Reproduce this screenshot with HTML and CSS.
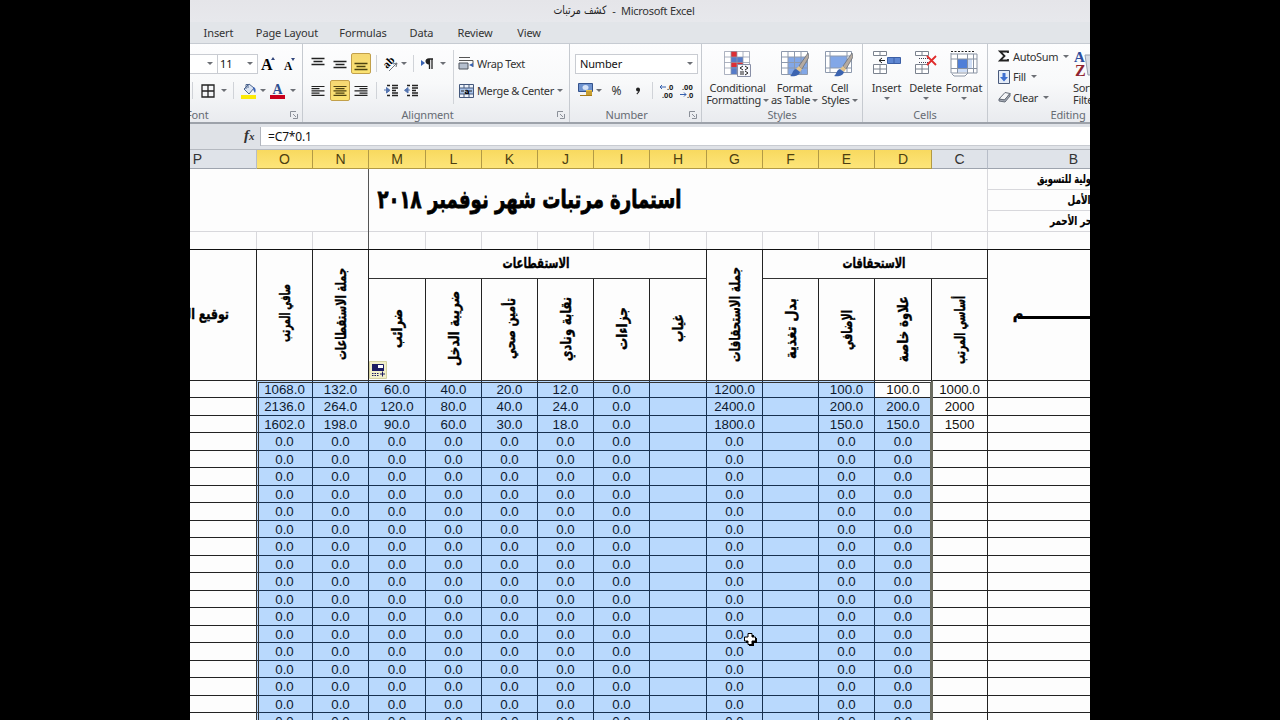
FILE: index.html
```html
<!DOCTYPE html>
<html lang="en">
<head>
<meta charset="utf-8">
<title>كشف مرتبات - Microsoft Excel</title>
<link rel="stylesheet" href="styles.css">
</head>
<body>
<svg class="defs" width="0" height="0">
  <symbol id="launch" viewBox="0 0 8 8"><path d="M.5 6V.5H6M3 3l3 3M7.500 3v4.500H3" fill="none" stroke="#8b9099"/></symbol>
  <symbol id="brush" viewBox="0 0 19 26"><path d="M18 1L9 14l3 3L19 5z" fill="#b5aaa0" stroke="#69707a" stroke-width=".8"/><path d="M9 14l3 3-2 3-4-3z" fill="#e4c38a"/><path d="M6 17l4 3c-1 4-6 5-10 4 3-2 2-6 6-7z" fill="#3c64b0"/></symbol>
</svg>
<div class="app">
  <header class="title"><svg class="ar" width="54" height="18"><text class="ttl" x="27" y="14" textLength="53" lengthAdjust="spacingAndGlyphs">كشف مرتبات</text></svg><i>-</i><span>Microsoft Excel</span></header>
  <nav class="tabs"><span>Insert</span><span>Page Layout</span><span>Formulas</span><span>Data</span><span>Review</span><span>View</span></nav>
  <div class="ribbon">
    <section class="group g-font">
      <div class="row f1">
        <span class="box nm"><b class="dd"></b></span><span class="box sz">11<b class="dd"></b></span>
        <svg width="16" height="18"><text x="0" y="15" class="serif" font-size="16">A</text><path d="M10 5l2-3 2 3z" fill="#33477c"/></svg>
        <svg width="16" height="18"><text x="2" y="15" class="serif" font-size="11.500">A</text><path d="M9 3h4l-2 3z" fill="#33477c"/></svg>
      </div>
      <div class="row f2">
        <u></u>
        <svg width="14" height="14"><path d="M1 1h12v12H1zM7 1v12M1 7h12" fill="none" stroke="#222" stroke-width="1.300"/></svg><b class="dd"></b><u></u>
        <svg width="16" height="16"><path d="M3 6l5-5 5 4-5 6z" fill="#dbe4f2" stroke="#4e668f"/><path d="M5 6V1.500h2V5" fill="none" stroke="#4e668f"/><path d="M12 4c3 0 3 4 2 6-1-2-2-3-2-6" fill="#3f66b5"/><path d="M0 12h15v4H0z" fill="#fcea08"/></svg><b class="dd"></b>
        <svg width="16" height="16"><text x="2.500" y="11" class="serif" font-size="14" fill="#2f4f8f">A</text><path d="M0 12h15v4H0z" fill="#c8001c"/></svg><b class="dd"></b>
      </div>
      <footer><span>Font</span><svg width="8" height="8"><use href="#launch"/></svg></footer>
    </section>
    <section class="group g-align">
      <div class="row a1">
        <span class="ic"><svg width="14" height="14"><path d="M.5 1.500h13M2.500 4.500h9M.500 7.500h13" stroke="#222" stroke-width="1.300"/></svg></span>
        <span class="ic"><svg width="14" height="14"><path d="M.5 4.500h13M2.500 7.500h9M.500 10.500h13" stroke="#222" stroke-width="1.300"/></svg></span>
        <span class="ic on"><svg width="14" height="14"><path d="M.5 6.500h13M2.500 9.500h9M.500 12.500h13" stroke="#4d4310" stroke-width="1.300"/></svg></span>
        <u></u>
        <svg width="17" height="16"><text transform="translate(5 13) rotate(-45)" x="0" y="0" class="serif" font-size="11">ab</text><path d="M7 15L15 7M15 7l-4 1M15 7l-1 4" stroke="#6d737c" fill="none"/></svg><b class="dd"></b><u></u>
        <svg width="14" height="12"><path d="M0 2l4 3-4 3z" fill="#3762b3"/><path d="M9 6C4 6 4 1 8 1h4M8.500 1v10M11 1v10" stroke="#222" fill="none" stroke-width="1.300"/><path d="M8 1v5C4 6 4 1 8 1" fill="#222"/></svg><b class="dd"></b><u class="tallsep"></u>
        <svg width="16" height="15"><path d="M1 1.500h11M1 4.500h14v6l-2-2" stroke="#555" fill="none"/><path d="M1 7h9v6H1z" fill="#b5bfce" stroke="#4d535c"/><path d="M11 9l4-2v4z" fill="#3762b3"/></svg><span class="lb">Wrap Text</span>
      </div>
      <div class="row a2">
        <span class="ic"><svg width="14" height="12"><path d="M.5 1.500h13M.500 3.700h8M.500 5.900h13M.500 8.100h8M.500 10.300h13" stroke="#222" stroke-width="1.200"/></svg></span>
        <span class="ic on"><svg width="14" height="12"><path d="M.5 1.500h13M2.500 3.700h9M.500 5.900h13M2.500 8.100h9M.500 10.300h13" stroke="#4d4310" stroke-width="1.200"/></svg></span>
        <span class="ic"><svg width="14" height="12"><path d="M.5 1.500h13M5.500 3.700h8M.500 5.900h13M5.500 8.100h8M.500 10.300h13" stroke="#222" stroke-width="1.200"/></svg></span>
        <u></u>
        <svg width="15" height="13"><path d="M3 1.500h3M8 1.500h6M8 4h6M8 6.500h4M8 9h6M3 11.500h3M8 11.500h6" stroke="#222" stroke-width="1.300"/><path d="M0 6h5M2.500 3.500L6 6.300 2.500 9z" stroke="#5575b0" fill="#5575b0"/></svg>
        <svg width="15" height="13"><path d="M3 1.500h3M8 1.500h6M8 4h6M8 6.500h4M8 9h6M3 11.500h3M8 11.500h6" stroke="#222" stroke-width="1.300"/><path d="M6 6H1M4 3.500L.5 6.300 4 9z" stroke="#5575b0" fill="#5575b0"/></svg><u class="sp"></u>
        <svg width="15" height="14"><path d="M.5.5h14v13H.5z" fill="#eef3fa" stroke="#44587c"/><path d="M1 4h13v6H1z" fill="#a8c3ea"/><path d="M5 .5V4M10 .5V4M5 10v3M10 10v3M1 4h13M1 10h13" stroke="#44587c"/><text x="5.500" y="9.500" font-size="7.500" font-weight="bold">a</text><path d="M5 7H2m8 0h3" stroke="#222"/></svg><span class="lb mc">Merge &amp; Center</span><b class="dd"></b>
      </div>
      <footer><span>Alignment</span><svg width="8" height="8"><use href="#launch"/></svg></footer>
    </section>
    <section class="group g-num">
      <div class="row n1"><span class="box">Number<b class="dd"></b></span></div>
      <div class="row n2">
        <svg width="16" height="15"><path d="M.5.5h14v8H.5z" fill="#6e93cf" stroke="#34538c"/><ellipse cx="7.500" cy="4.500" rx="3" ry="2.500" fill="#d5e2f6"/><path d="M8 7h6v6H8z" fill="#e8c34d"/><path d="M8 9h6M8 11h6M2 12.500h12" stroke="#a77a15"/></svg><b class="dd"></b><span class="pc">%</span>
        <svg width="6" height="8"><circle cx="3" cy="2.500" r="2" fill="#222"/><path d="M4.300 2.500C4.300 5 3.500 6 1.800 7" stroke="#222" stroke-width="1.300" fill="none"/></svg><u></u>
        <svg width="16" height="14"><text x="8" y="6" class="dec">.0</text><text x="3" y="13.500" class="dec">.00</text><path d="M7 3H1l2-2M1 3l2 2" stroke="#3560ae" fill="none"/></svg>
        <svg width="16" height="14"><text x="3" y="6" class="dec">.00</text><text x="8" y="13.500" class="dec">.0</text><path d="M1 10.500h6l-2-2M7 10.500l-2 2" stroke="#3560ae" fill="none"/></svg>
      </div>
      <footer><span>Number</span><svg width="8" height="8"><use href="#launch"/></svg></footer>
    </section>
    <section class="group g-styles">
      <div class="bigs s">
        <div class="big"><svg width="28" height="28"><path d="M.5 1.500h25v23H.5z" fill="#fff"/><path d="M7 1h6v7H7zM7 12h12v5H7z" fill="#dc2f35"/><path d="M7 7h12v5H7zM7 17h6v7H7z" fill="#557bc8"/><path d="M.5 1.500h25v23H.5zM7 1.500v23M13 1.500v23M19 1.500v23M.500 7h25M.500 12.500h25M.500 18h25" fill="none" stroke="#9199ab" stroke-opacity=".75"/><path d="M13.500 14.500h13v12h-13z" fill="#f6f7fc" stroke="#888fa6"/><path d="M19 16l-3 2 3 2M21 16l3 2-3 2M16 22h4M16 24h4M21 21l3 2-3 2" stroke="#222" fill="none"/></svg><span>Conditional</span><span>Formatting<b class="dd"></b></span></div>
        <div class="big"><svg width="28" height="28"><path d="M.5 1.500h26v23H.5z" fill="#fff"/><path d="M7 7h19v17H7z" fill="#82a7e7"/><path d="M.5 1.500h26v23H.5zM7 1.500v23M13.500 1.500v23M20 1.500v23M.500 7h26M.500 12.500h26M.500 18h26" fill="none" stroke="#8d99ad"/><use href="#brush" x="9" y="2" width="19" height="26"/></svg><span>Format</span><span>as Table<b class="dd"></b></span></div>
        <div class="big"><svg width="28" height="28"><path d="M.5 1.500h26v21H.5z" fill="#fff"/><path d="M5 6h17v12H5z" fill="#82a7e7"/><path d="M.5 1.500h26v21H.5zM5 1.500v21M22 1.500v21M.500 6h26M.500 18h26" fill="none" stroke="#8d99ad"/><use href="#brush" x="9" y="2" width="19" height="26"/></svg><span>Cell</span><span>Styles<b class="dd"></b></span></div>
      </div>
      <footer><span>Styles</span></footer>
    </section>
    <section class="group g-cells">
      <div class="bigs c">
        <div class="big"><svg width="28" height="28"><path d="M.5 1.500h13v4H.5zM7 1.500v4M.500 14.500h13v9H.5zM7 14.500v9M.500 19h13" fill="#fff" stroke="#7b828e"/><path d="M14.500 7.500h13v6h-13z" fill="#5f87d2" stroke="#3c5fa5"/><path d="M21 8v5" stroke="#3c5fa5"/><path d="M12 10.500H6l3-2.500M6 10.500L9 13" stroke="#222" fill="none"/></svg><span>Insert</span><b class="dd"></b></div>
        <div class="big"><svg width="28" height="28"><path d="M3.500 1.500h13v4h-13zM10 1.500v4M3.500 14.500h13v9h-13zM10 14.500v9M3.500 19h13" fill="#fff" stroke="#7b828e"/><path d="M7 8.500h11M7 12.500h11" stroke="#445" stroke-dasharray="1 1"/><path d="M15 6l9 9M24 6l-9 9" stroke="#e02c2c" stroke-width="1.800"/></svg><span>Delete</span><b class="dd"></b></div>
        <div class="big"><svg width="28" height="28"><path d="M.5 4.500h27v18l-9 4h-16l-2-4z" fill="#fff"/><path d="M8 9h9v10H8z" fill="#4f7fd8"/><path d="M17 9h5v10h-5zM8 19h9v3H8z" fill="#cfdef6"/><path d="M1 3v20h26V4H1M7.500 4v19M17.500 4v19M23.500 4v19M1 9h26M1 18.500h26M2 24l2 2h11l3-3" fill="none" stroke="#8993a3"/><path d="M1 1.500h23" stroke="#222" stroke-dasharray="2 1.500"/></svg><span>Format</span><b class="dd"></b></div>
      </div>
      <footer><span>Cells</span></footer>
    </section>
    <section class="group g-edit">
      <div class="edit">
        <div class="list">
          <div><svg width="12" height="14"><path d="M10 4V2.500H2L6.500 7 2 11.500h8V10" fill="none" stroke="#222" stroke-width="1.800"/></svg><span>AutoSum</span><b class="dd"></b></div>
          <div><svg width="12" height="14"><path d="M.5.5h11v13H.5z" fill="#e4ecf8" stroke="#4a5b7c"/><path d="M4.500 3h3v4H10l-4 4.500L2 7h2.500z" fill="#3d6fd0"/></svg><span>Fill</span><b class="dd"></b></div>
          <div><svg width="12" height="14"><path d="M1 9l6-6.500 5 1L6.500 10z" fill="#f5f6f8" stroke="#666d78"/><path d="M1 9l5.500 1L12 3.500V6l-5 6-6-1z" fill="#a9afba" stroke="#666d78"/></svg><span>Clear</span><b class="dd"></b></div>
        </div>
        <div class="big sort"><svg width="28" height="28"><path d="M12 5h14v20H15z" fill="#d8dce4" stroke="#989fae"/><text x="1" y="12" class="serif" font-size="15" fill="#2c4d9c">A</text><text x="2" y="26" class="serif" font-size="16" fill="#8f2430">Z</text></svg><span>Sort &amp;</span><span>Filter</span></div>
      </div>
      <footer><span>Editing</span></footer>
    </section>
  </div>
  <div class="fbar"><div class="fx"><em>f</em><em class="x">x</em></div><div class="formula">=C7*0.1</div></div>
  <div class="cols" id="cols"></div>
  <div class="top">
    <div class="topl"></div>
    <div class="heading"><svg width="618" height="62"><text class="head" x="160.500" y="39" textLength="304" lengthAdjust="spacingAndGlyphs">استمارة مرتبات شهر نوفمبر ٢٠١٨</text></svg></div>
    <div class="comp">
      <svg width="103" height="21"><text class="co" x="76" y="14" textLength="54" lengthAdjust="spacingAndGlyphs">ولية للتسويق</text></svg>
      <svg width="103" height="21"><text class="co" x="91" y="14" textLength="23" lengthAdjust="spacingAndGlyphs">الأمل</text></svg>
      <svg width="103" height="21"><text class="co" x="83" y="14" textLength="42" lengthAdjust="spacingAndGlyphs">حر الأحمر</text></svg>
    </div>
  </div>
  <div class="gap" id="gap"></div>
  <div class="thead" id="thead"></div>
  <div class="body" id="body"><div class="sel"></div></div>
  <svg class="smart" width="18" height="18"><path d="M.5.5h17v17H.5z" fill="#f1efc9" stroke="#d4d1a2"/><path d="M3.500 3.500h11v6h-11z" fill="#fff" stroke="#1c1c63"/><path d="M3 3h6v7H3zM9 7h6v3H9z" fill="#1c1c63"/><path d="M3 12.500h7M3 14.500h7" stroke="#1c1c63" stroke-dasharray="1.500 1"/><path d="M11 13h5M13.500 10.500v5" stroke="#1c1c63"/></svg>
  <svg class="cursor" width="15" height="15"><path d="M6 3h5v3h3v5h-3v3H6v-3H3V6h3z" fill="#000"/><path d="M5 1.500h4V5h3.500v4H9v3.500H5V9H1.500V5H5z" fill="#fff" stroke="#000"/></svg>
</div>
<script src="sheet.js"></script>
</body>
</html>
```
FILE: styles.css
```css
* { box-sizing: border-box; }
body { margin: 0; background: #000; overflow: hidden; font: 11px "Noto Sans", "Open Sans", sans-serif; color: #333; }
.defs { position: absolute; }
svg { display: block; flex: none; overflow: visible; }
.app { position: relative; width: 900px; height: 720px; margin-left: 190px; overflow: hidden; background: #fdfdfd; }
.title { height: 22px; background: linear-gradient(#e5e5e9, #e7e8ec); display: flex; padding-left: 363px; line-height: 21px; white-space: nowrap; }
.title i { font-style: normal; width: 14px; text-align: center; }
.title span { letter-spacing: -.27px; }
.tabs { height: 22px; background: #e2e5e9; border-bottom: 1px solid #c6cbd2; display: grid; grid-template-columns: 54px 83px 69px 48px 59px 49px; padding-left: 1.500px; line-height: 22px; letter-spacing: -.12px; text-align: center; white-space: nowrap; }
.ribbon { height: 80px; display: flex; background: linear-gradient(#fdfdfe, #f8f9fa 50%, #e9ebef); border-bottom: 2px solid #9da2aa; white-space: nowrap; letter-spacing: -.15px; }
.group { flex: none; height: 78px; padding-top: 6px; display: flex; flex-direction: column; border-right: 1px solid #c6cad0; position: relative; }
.g-font { width: 113px; } .g-align { width: 267px; } .g-num { width: 132px; } .g-styles { width: 161px; } .g-cells { width: 125px; } .g-edit { width: 160px; border: 0; }
.group footer { margin-top: auto; height: 15px; line-height: 15px; display: flex; justify-content: center; color: #666b73; }
.group footer svg { position: absolute; right: 4px; bottom: 3px; }
.g-font footer { justify-content: flex-start; }
.g-font footer span { margin-left: -4px; }
.g-align footer { padding-right: 17px; }
.g-num footer { padding-right: 18px; }
.row { display: grid; align-items: center; height: 27px; }
.row u, .row svg, .row .dd { justify-self: center; }
u { width: 1px; height: 17px; background: #d0d3d8; }
.tallsep, .sp { height: 27px; }
.row .sp { margin-left: 30px; }
.dd { display: inline-block; width: 0; height: 0; border: 3px solid transparent; border-top: 3px solid #6c6f75; border-bottom: 0; flex: none; }
.box { height: 20px; border: 1px solid #c9ccd2; background: #fff; line-height: 19px; padding: 0 4px; color: #111; display: flex; justify-content: space-between; align-items: center; }
.nm { justify-content: flex-end; border-left: 0; }
.sz { border-left: 0; padding-left: 2px; }
.serif { font-family: "Liberation Serif", serif; font-weight: bold; }
.f1 { grid-template-columns: 28px 40px 21px 21px; }
.f2 { grid-template-columns: 4px 28px 4px 14px 18px 10px 20px 9px; }
.a1 { grid-template-columns: 22px 21px 22px 8px 21px 5px 14px 16px 14px 6px 20px 60px; padding-left: 4px; }
.a2 { grid-template-columns: 22px 21px 22px 8px 22px 18px 36px 20px 79px 10px; padding-left: 4px; }
.ic { width: 20px; height: 21px; display: grid; place-items: center; justify-self: center; border-radius: 2px; }
.on { background: linear-gradient(#f5d873, #fbe372); border: 1px solid #c2a04a; }
.lb { padding-left: 1px; letter-spacing: -.4px; }
.mc { letter-spacing: -.37px; }
.n1 { padding-left: 5px; grid-template-columns: 123px; }
.n2 { padding-left: 7px; grid-template-columns: 17px 10px 25px 17px 13px 16px 24px; }
.pc { font-size: 12px; text-align: center; }
.dec { font: bold 7.500px "Noto Sans", sans-serif; fill: #222; letter-spacing: 0; }
.bigs { display: grid; }
.s { grid-template-columns: 71px 43px 47px; }
.c { grid-template-columns: 47px 31px 46px; }
.big { display: flex; flex-direction: column; align-items: center; line-height: 12px; justify-self: center; letter-spacing: -.3px; }
.c .big { letter-spacing: -.15px; }
.big svg { margin-bottom: 4px; }
.big .dd { margin-left: 2px; vertical-align: 2px; }
.big > .dd { margin: 3px 0 0; }
.edit { display: flex; height: 48px; }
.list { width: 85px; padding: 0 0 0 10px; margin-top: -4px; }
.list div { display: flex; align-items: center; height: 20.500px; }
.list span { margin: 0 5px 0 3px; letter-spacing: -.35px; }
.sort { align-items: flex-start; }
.fbar { height: 26px; background: #dfe2e7; display: flex; padding: 3px 0 3px; border-bottom: 1px solid #b5b9c0; }
.fx { width: 71px; border-right: 1px solid #b2b6be; padding-left: 54px; font: italic bold 15px/17px "Liberation Serif", serif; }
.fx .x { font-size: 11px; }
.formula { flex: 1; background: #fff; padding-left: 7px; font-size: 12px; line-height: 19px; letter-spacing: -.15px; color: #111; border-bottom: 1px solid #c8cbd1; }
.cols, .gap, .body, .thead { display: grid; grid-template-columns: 67px 56px 56px 57px 56px 56px 56px 56px 57px 56px 56px 56px 57px 56px 103px; }
.cols { height: 19px; font: 14px/18px "Liberation Sans", sans-serif; text-align: center; background: #dfe3e9; }
.cols span { border-right: 1px solid #b7bdc8; border-bottom: 1px solid #9ea4ae; color: #333; }
.cols .hi { background: linear-gradient(#f8d95f, #fde579); border-color: #b29a45; color: #4d3f10; }
.cols span:first-child { padding-right: 51px; }
.cols span:last-child { padding-left: 68px; border-right: 0; }
.top { display: grid; grid-template-columns: 179px 619px 103px; height: 63px; border-bottom: 1px solid #d8d8dc; }
.topl { border-right: 1px solid #555; }
.heading { border-right: 1px solid #d8d8dc; }
.comp svg { border-bottom: 1px solid #d8d8dc; }
.gap { height: 18px; border-bottom: 1px solid #111; }
.gap span { border-right: 1px solid #d8d8dc; }
.gap .dark { border-color: #555; }
text { direction: rtl; text-anchor: middle; font-family: "DejaVu Sans", sans-serif; letter-spacing: 0; }
.row text, .big text { direction: ltr; text-anchor: start; }
.row text.serif, .big text.serif { font-family: "Liberation Serif", serif; }
.ttl { font-size: 11.500px; fill: #222; }
.head { font-size: 25px; font-weight: bold; fill: #000; stroke: #000; stroke-width: .8px; }
.co { font-size: 11.500px; font-weight: bold; fill: #000; stroke: #000; stroke-width: .2px; }
.h { font-size: 14.500px; font-weight: bold; fill: #000; stroke: #000; stroke-width: .4px; }
.thead { height: 130px; grid-template-rows: 29px 101px; }
.thead > div { border-right: 1px solid #222; }
.thead .grp { border-bottom: 1px solid #333; }
.thead .tall { grid-row: span 2; }
.thead .name { position: relative; border: 0; }
.stroke { position: absolute; left: 30px; right: 0; top: 66px; height: 3px; background: #000; }
.body { position: relative; border-top: 1px solid #222; height: 345px; font: 13.300px/18px "Liberation Sans", sans-serif; text-align: center; color: #111; }
.body span { border-right: 1px solid #222; border-bottom: 1px solid #222; background: #fdfdfd; }
.body .b { background: #b9d9fd; border-color: #17304f; color: #0d1a30; }
.sel { position: absolute; left: 66px; top: -1px; width: 677px; height: 360px; border: 3px double #333; border-right: 3px solid #6b6c60; }
.smart { position: absolute; left: 179px; top: 361px; }
.cursor { position: absolute; left: 553px; top: 632px; }
```
FILE: sheet.js
```javascript
const letters = ['P','O','N','M','L','K','J','I','H','G','F','E','D','C','B'];
document.getElementById('cols').innerHTML = letters.map((l, i) => `<span class="${i > 0 && i < 13 ? 'hi' : ''}">${l}</span>`).join('');
document.getElementById('gap').innerHTML = letters.map(l => `<span class="${l === 'N' ? 'dark' : ''}"></span>`).join('');

// Rotated heading: centre is given inside a 56px wide cell.
const vert = (txt, len, mid, h, tall) =>
  `<div class="${tall ? 'tall' : ''}"><svg width="55" height="${h}"><text class="h" transform="translate(33 ${mid}) rotate(-90)" textLength="${len}" lengthAdjust="spacingAndGlyphs">${txt}</text></svg></div>`;
const group = (txt, len, span, x) =>
  `<div class="grp" style="grid-column: span ${span}"><svg width="200" height="28"><text class="h" x="${x}" y="18" textLength="${len}" lengthAdjust="spacingAndGlyphs">${txt}</text></svg></div>`;
const T = 250;
const sub = (txt, len, mid) => vert(txt, len, mid - T - 29, 101, false);
const full = (txt, len, mid) => vert(txt, len, mid - T, 130, true);
document.getElementById('thead').innerHTML =
  '<div class="tall"><svg width="66" height="130"><text class="h" x="0" y="69" textLength="78" lengthAdjust="spacingAndGlyphs">توقيع المستلم</text></svg></div>' +
  full('صافي المرتب', 58, 313) + full('جملة الاستقطاعات', 92, 314) +
  group('الاستقطاعات', 67, 6, 167) + full('جملة الاستحقاقات', 95, 314.5) +
  group('الاستحقاقات', 63, 4, 111) +
  '<div class="tall name"><svg width="103" height="130"><text class="h" x="30" y="69">م</text></svg><i class="stroke"></i></div>' +
  sub('ضرائب', 39, 328.5) + sub('ضريبة الدخل', 75, 328.5) + sub('تأمين صحي', 61, 328.5) +
  sub('نقابة ونادي', 64, 329) + sub('جزاءات', 43, 328.5) + sub('غياب', 28, 328) +
  sub('بدل تغذية', 61, 328.5) + sub('الإضافي', 40, 330) + sub('علاوة خاصة', 66, 329) + sub('أساسي المرتب', 68, 330);

const data = [
  ['', '1068.0', '132.0', '60.0', '40.0', '20.0', '12.0', '0.0', '', '1200.0', '', '100.0', '100.0', '1000.0', ''],
  ['', '2136.0', '264.0', '120.0', '80.0', '40.0', '24.0', '0.0', '', '2400.0', '', '200.0', '200.0', '2000', ''],
  ['', '1602.0', '198.0', '90.0', '60.0', '30.0', '18.0', '0.0', '', '1800.0', '', '150.0', '150.0', '1500', '']
];
while (data.length < 20) data.push(letters.map(l => 'PHFCB'.includes(l) ? '' : '0.0'));
const body = document.getElementById('body');
body.style.gridTemplateRows = data.map((r, i) => (i % 2 === 0 ? 17 : 18) + 'px').join(' ');
body.insertAdjacentHTML('afterbegin', data.map((r, y) => r.map((v, x) =>
  `<span class="${x > 0 && x < 13 && !(y === 0 && x === 12) ? 'b' : ''}">${v}</span>`).join('')).join(''));
```
